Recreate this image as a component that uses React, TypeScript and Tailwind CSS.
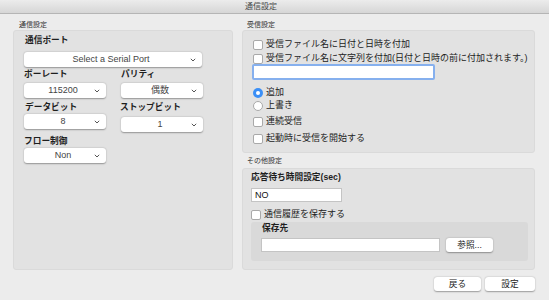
import React from "react";

const font = { fontFamily: '"Liberation Sans", "Noto Sans CJK JP", sans-serif' };

function Chevron() {
  return (
    <svg width="6" height="4" viewBox="0 0 6 4" className="absolute right-[6px] top-1/2 -translate-y-1/2">
      <path d="M0.8 0.8 L3 3 L5.2 0.8" fill="none" stroke="#555" strokeWidth="1" />
    </svg>
  );
}

function Select({ text, className }: { text: string; className: string }) {
  return (
    <div
      className={`relative h-[15px] bg-white rounded-[3px] shadow-[0_0.5px_1.5px_rgba(0,0,0,0.35)] flex items-center justify-center text-[9px] leading-[11px] text-[#444] ${className}`}
    >
      <span className="pr-[4px]">{text}</span>
      <Chevron />
    </div>
  );
}

function Checkbox() {
  return <div className="w-[10px] h-[10px] bg-white border border-[#a9a9a9] rounded-[2px] shrink-0" />;
}

function Radio({ on }: { on?: boolean }) {
  return on ? (
    <div className="w-[10px] h-[10px] rounded-full bg-[#3b8ff6] flex items-center justify-center shrink-0">
      <div className="w-[4px] h-[4px] rounded-full bg-white" />
    </div>
  ) : (
    <div className="w-[10px] h-[10px] rounded-full bg-white border border-[#a9a9a9] shrink-0" />
  );
}

function Label({ children, className = "" }: { children: React.ReactNode; className?: string }) {
  return <div className={`h-[11px] leading-[11px] text-[8.7px] font-bold text-[#1e1e1e] ${className}`}>{children}</div>;
}

function CheckRow({ children, className = "", radio, on }: { children: React.ReactNode; className?: string; radio?: boolean; on?: boolean }) {
  return (
    <div className={`h-[11px] flex items-center gap-[3px] text-[9px] leading-[11px] text-[#222] ${className}`}>
      {radio ? <Radio on={on} /> : <Checkbox />}
      <span className="whitespace-nowrap">{children}</span>
    </div>
  );
}

function Button({ children, className = "" }: { children: React.ReactNode; className?: string }) {
  return (
    <div
      className={`h-[14px] bg-white rounded-[3px] shadow-[0_0.5px_1.5px_rgba(0,0,0,0.35)] flex items-center justify-center text-[8.7px] leading-[11px] text-[#222] ${className}`}
    >
      {children}
    </div>
  );
}

function SectionTitle({ children, className = "" }: { children: React.ReactNode; className?: string }) {
  return (
    <div className={`flex items-end text-[7px] leading-[8px] text-[#333] ${className}`}>
      {children}
    </div>
  );
}

export default function App() {
  return (
    <div style={font} className="w-[549px] h-[300px] bg-[#ececec] flex flex-col overflow-hidden">
      <div className="h-[14px] shrink-0 bg-gradient-to-b from-[#ececec] to-[#d6d6d6] border-b border-[#b5b5b5] flex items-center justify-center pr-[27px] text-[8px] leading-[10px] text-[#4a4a4a]">
        通信設定
      </div>
      <div className="flex pl-[13px] gap-[9px]">
        {/* Left column */}
        <div className="w-[220px] flex flex-col">
          <SectionTitle className="h-[16px] pb-[1px] pl-[6px]">通信設定</SectionTitle>
          <div className="h-[240px] bg-[#e2e2e2] rounded-[3px] border border-[#dadada] pl-[10px] pt-[3px] flex flex-col">
            <Label className="mt-[1px] ml-[1px]">通信ポート</Label>
            <Select text="Select a Serial Port" className="w-[178px] mt-[6px]" />
            <div className="flex">
              <div className="w-[97px] flex flex-col">
                <Label className="mt-[2px]">ボーレート</Label>
                <Select text="115200" className="w-[82px] mt-[3px]" />
                <Label className="mt-[4px] ml-[1px]">データビット</Label>
                <Select text="8" className="w-[82px] mt-[1px]" />
                <Label className="mt-[7px]">フロー制御</Label>
                <Select text="Non" className="w-[82px] mt-[1px]" />
              </div>
              <div className="w-[82px] flex flex-col">
                <Label className="mt-[2px]">パリティ</Label>
                <Select text="偶数" className="w-[82px] mt-[3px]" />
                <Label className="mt-[4px] -ml-[1px]">ストップビット</Label>
                <Select text="1" className="w-[82px] mt-[4px]" />
              </div>
            </div>
          </div>
        </div>
        {/* Right column */}
        <div className="w-[293px] flex flex-col">
          <SectionTitle className="h-[16px] pb-[1px] pl-[5px]">受信設定</SectionTitle>
          <div className="h-[123px] bg-[#e2e2e2] rounded-[3px] border border-[#dadada] pl-[10px] flex flex-col">
            <CheckRow className="mt-[8px]">受信ファイル名に日付と日時を付加</CheckRow>
            <CheckRow className="mt-[3px]">受信ファイル名に文字列を付加(日付と日時の前に付加されます。)</CheckRow>
            <div className="w-[183px] h-[16px] -ml-[1px] mt-[0px] bg-white border-[2px] border-[#86b0ee] rounded-[2px]" />
            <CheckRow radio on className="mt-[7px]">追加</CheckRow>
            <CheckRow radio className="mt-[2px]">上書き</CheckRow>
            <CheckRow className="mt-[5px]">連続受信</CheckRow>
            <CheckRow className="mt-[6px]">起動時に受信を開始する</CheckRow>
          </div>
          <SectionTitle className="h-[15px] pb-[3px] pl-[5px]">その他設定</SectionTitle>
          <div className="h-[102px] bg-[#e2e2e2] rounded-[3px] border border-[#dadada] pl-[8px] flex flex-col">
            <Label className="mt-[3px]">応答待ち時間設定(sec)</Label>
            <div className="w-[91px] h-[14px] mt-[5px] bg-white border border-[#c4c4c4] flex items-center pl-[3px] text-[9px] leading-[11px] text-[#111]">
              NO
            </div>
            <CheckRow className="mt-[7px]">通信履歴を保存する</CheckRow>
            <div className="w-[277px] h-[39px] mt-[2px] bg-[#d9d9d9] rounded-[3px] pl-[10px] flex flex-col">
              <Label className="mt-[1px] ml-[1px]">保存先</Label>
              <div className="flex items-center gap-[6px] mt-[4px]">
                <div className="w-[179px] h-[14px] bg-white border border-[#c4c4c4]" />
                <Button className="w-[47px] h-[13px]">参照...</Button>
              </div>
            </div>
          </div>
        </div>
      </div>
      <div className="flex justify-end gap-[4px] pr-[14px] mt-[7px]">
        <Button className="w-[47px]">戻る</Button>
        <Button className="w-[50px]">設定</Button>
      </div>
    </div>
  );
}
